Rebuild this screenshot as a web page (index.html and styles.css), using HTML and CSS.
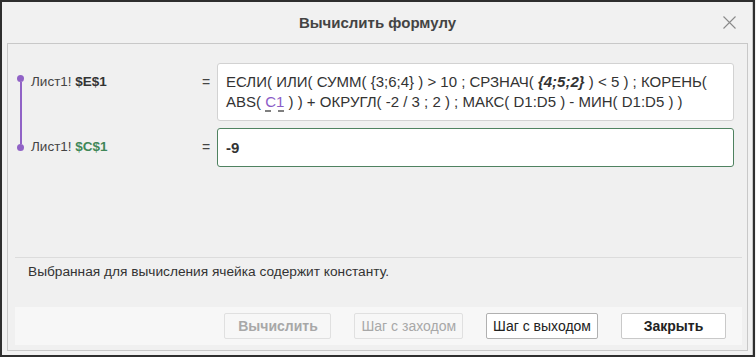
FILE: index.html
```html
<!DOCTYPE html>
<html lang="ru">
<head>
<meta charset="utf-8">
<title>Вычислить формулу</title>
<link rel="stylesheet" href="styles.css">
</head>
<body>
<div class="dialog">
  <div class="header">
    <div class="title">Вычислить формулу</div>
    <button class="close" aria-label="Закрыть">
      <svg width="13" height="13" viewBox="0 0 13 13"><path d="M0.5 0.5 L12.5 12.5 M12.5 0.5 L0.5 12.5" stroke="#8a8a8a" stroke-width="1.1" fill="none"/></svg>
    </button>
  </div>
  <div class="panel">
    <div class="steps">
      <div class="timeline"><span class="dot"></span><span class="line"></span><span class="dot"></span></div>
      <div class="label">Лист1! <b>$E$1</b></div>
      <div class="eq">=</div>
      <div class="box formula">
        <span class="fline"><span>ЕСЛИ( ИЛИ( СУММ( {3;6;4} ) &gt; 10 ; СРЗНАЧ(</span> <b class="arr">{4;5;2}</b> <span>) &lt; 5 ) ; КОРЕНЬ(</span></span>
        <span class="fline"><span>ABS(</span> <span class="ref">C1</span> <span>) ) + ОКРУГЛ( -2 / 3 ; 2 ) ; МАКС( D1:D5 ) - МИН( D1:D5 ) )</span></span>
      </div>
      <div class="label">Лист1! <b class="green">$C$1</b></div>
      <div class="eq">=</div>
      <div class="box result"><b>-9</b></div>
    </div>
    <div class="status">Выбранная для вычисления ячейка содержит константу.</div>
    <div class="footer">
      <button class="btn bold" disabled>Вычислить</button>
      <button class="btn" disabled>Шаг с заходом</button>
      <button class="btn active">Шаг с выходом</button>
      <button class="btn bold primary">Закрыть</button>
    </div>
  </div>
</div>
</body>
</html>
```
FILE: styles.css
```css
* { box-sizing: border-box; }
html, body { margin: 0; padding: 0; background: #f1f1f1; }
body { font-family: "Liberation Sans", Arial, sans-serif; color: #333; }

.dialog {
  width: 755px;
  height: 357px;
  border: 2px solid #2e2e2e;
  background: #f1f1f1;
  box-shadow: inset -1px 0 0 #c4c4c4;
  display: flex;
  flex-direction: column;
}

.header {
  height: 41px;
  display: grid;
  grid-template-columns: 1fr auto 1fr;
  align-items: center;
}
.title {
  grid-column: 2;
  font-size: 15px;
  font-weight: bold;
  color: #444;
}
.close {
  grid-column: 3;
  justify-self: end;
  margin-right: 17px;
  width: 13px;
  height: 13px;
  padding: 0;
  border: 0;
  background: none;
  display: flex;
}

.panel {
  margin: 0 5px 4px 5px;
  height: 308px;
  border: 1px solid #c8c8c8;
  background: #f0f0f0;
  display: flex;
  flex-direction: column;
}

.steps {
  flex: 1;
  display: grid;
  grid-template-columns: 23px 164px 22px 517px;
  grid-template-rows: auto auto;
  row-gap: 7px;
  align-content: start;
  padding-top: 19px;
}

.timeline {
  grid-row: 1 / 3;
  grid-column: 1;
  display: flex;
  flex-direction: column;
  align-items: flex-start;
  padding: 12px 0 16px 9px;
}
.dot {
  width: 7px;
  height: 7px;
  border-radius: 50%;
  background: #9062c6;
}
.line {
  flex: 1;
  width: 2px;
  margin-left: 2.5px;
  background: #9062c6;
}

.label {
  font-size: 13.5px;
  line-height: 20px;
  padding-top: 9px;
  color: #444;
  white-space: nowrap;
}
.label b { color: #333; }
.label b.green { color: #3f8757; }

.eq {
  font-size: 14px;
  line-height: 20px;
  padding-top: 9px;
  text-align: center;
  color: #444;
}

.box {
  background: #fff;
  border-radius: 3px;
  font-size: 15px;
  line-height: 20px;
  color: #333;
  padding: 8px 8px;
}
.formula { border: 1px solid #d2d2d2; }
.fline { display: block; white-space: nowrap; }
.arr { font-style: italic; }
.ref {
  color: #8a5cc7;
  text-decoration: underline dashed #555;
  text-underline-offset: 4px;
}
.result {
  border: 1px solid #4f8260;
  line-height: 21px;
}

.status {
  height: 50px;
  margin: 0 5px 0 7px;
  border-top: 1px solid #dcdcdc;
  padding: 6px 0 0 13px;
  font-size: 13.7px;
  line-height: 16px;
  color: #333;
}

.footer {
  height: 38px;
  margin: 0 5px 5px 7px;
  background: #f7f7f7;
  display: flex;
  justify-content: flex-end;
  align-items: center;
  gap: 23px;
  padding-right: 16px;
}

.btn {
  height: 26px;
  min-width: 107px;
  padding: 0 6px;
  font-family: "Liberation Sans", Arial, sans-serif;
  font-size: 14px;
  color: #222;
  background: #fff;
  border: 1px solid #c9c9c9;
  border-radius: 2px;
}
.btn.bold { font-weight: bold; }
.btn:disabled {
  background: #f7f7f7;
  border-color: #e0e0e0;
  color: #a8a8a8;
}
.btn.active { border-color: #b0b0b0; }
.btn.primary { min-width: 105px; }
```
